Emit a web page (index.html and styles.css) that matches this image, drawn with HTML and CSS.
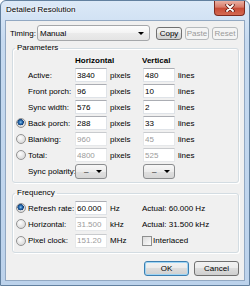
FILE: index.html
```html
<!DOCTYPE html>
<html>
<head>
<link rel="stylesheet" href="styles.css">
</head>
<body>
<div class="window">
  <div class="titlebar">
    <span class="title">Detailed Resolution</span>
    <span class="close">
      <svg width="10" height="8" viewBox="0 0 10 8">
        <path d="M2 1 L8 7 M8 1 L2 7" stroke="#5a1a12" stroke-width="3.4" stroke-linecap="round"/>
        <path d="M2 1 L8 7 M8 1 L2 7" stroke="#fff" stroke-width="1.8" stroke-linecap="round"/>
      </svg>
    </span>
  </div>

  <div class="client">
    <div class="timing">
      <span class="lbl">Timing:</span>
      <div class="combo wide"><span>Manual</span><span class="arrow"></span></div>
      <button class="btn copy">Copy</button>
      <button class="btn paste" disabled>Paste</button>
      <button class="btn reset" disabled>Reset</button>
    </div>

    <fieldset class="group params">
      <legend>Parameters</legend>
      <div class="grid">
        <span></span><span></span>
        <span class="head h1">Horizontal</span>
        <span class="head h2">Vertical</span>

        <span></span><span>Active:</span>
        <input class="edit" value="3840"><span class="unit">pixels</span>
        <input class="edit" value="480"><span class="unit">lines</span>

        <span></span><span>Front porch:</span>
        <input class="edit" value="96"><span class="unit">pixels</span>
        <input class="edit" value="10"><span class="unit">lines</span>

        <span></span><span>Sync width:</span>
        <input class="edit" value="576"><span class="unit">pixels</span>
        <input class="edit" value="2"><span class="unit">lines</span>

        <span class="radio on"></span><span>Back porch:</span>
        <input class="edit" value="288"><span class="unit">pixels</span>
        <input class="edit" value="33"><span class="unit">lines</span>

        <span class="radio"></span><span>Blanking:</span>
        <input class="edit" value="960" disabled><span class="unit">pixels</span>
        <input class="edit" value="45" disabled><span class="unit">lines</span>

        <span class="radio"></span><span>Total:</span>
        <input class="edit" value="4800" disabled><span class="unit">pixels</span>
        <input class="edit" value="525" disabled><span class="unit">lines</span>

        <span></span><span>Sync polarity:</span>
        <div class="combo small"><span>&ndash;</span><span class="arrow"></span></div><span></span>
        <div class="combo small"><span>&ndash;</span><span class="arrow"></span></div><span></span>
      </div>
    </fieldset>

    <fieldset class="group freq">
      <legend>Frequency</legend>
      <div class="grid">
        <span class="radio on"></span><span>Refresh rate:</span>
        <input class="edit" value="60.000"><span class="unit">Hz</span>
        <span class="actual">Actual: 60.000 Hz</span>

        <span class="radio"></span><span>Horizontal:</span>
        <input class="edit" value="31.500" disabled><span class="unit">kHz</span>
        <span class="actual">Actual: 31.500 kHz</span>

        <span class="radio"></span><span>Pixel clock:</span>
        <input class="edit" value="151.20" disabled><span class="unit">MHz</span>
        <span class="actual check"><span class="box"></span>Interlaced</span>
      </div>
    </fieldset>

    <div class="buttons">
      <button class="btn big ok">OK</button>
      <button class="btn big">Cancel</button>
    </div>
  </div>
</div>
</body>
</html>
```

FILE: styles.css
```css
* {
  box-sizing: border-box;
}
body {
  margin: 0;
  background: #fff;
  font-family: "Liberation Sans", Arial, sans-serif;
  font-size: 8px;
  color: #000;
}

.window {
  width: 250px;
  height: 286px;
  display: flex;
  flex-direction: column;
  border: 1px solid #62809f;
  border-radius: 6px 6px 0 0;
  padding: 0 4px 4px;
  background: linear-gradient(#dce9f7, #c6daf0 40px, #bcd2eb);
}
.titlebar {
  height: 19px;
  display: flex;
  justify-content: space-between;
  align-items: flex-start;
}
.title {
  padding: 4px 0 0 1px;
  line-height: 10px;
  text-shadow: 0 0 3px #fff, 0 0 3px #fff;
}
.close {
  width: 31px;
  height: 15px;
  border: 1px solid #7e2a1e;
  border-top: 0;
  border-radius: 0 0 4px 4px;
  background: linear-gradient(#eab0a3, #d77a68 45%, #c74a35 50%, #d36a52);
  display: flex;
  align-items: center;
  justify-content: center;
}

.client {
  flex: 1;
  background: #f0f0f0;
  border: 1px solid #92a8c2;
  display: flex;
  flex-direction: column;
}

.timing {
  display: flex;
  align-items: center;
  height: 16px;
  margin: 4px 6px 0 4px;
}
.timing .lbl {
  width: 27px;
}

.combo {
  display: flex;
  align-items: center;
  justify-content: space-between;
  border: 1px solid #8a8c8e;
  border-radius: 3px;
  background: linear-gradient(#f7f7f7, #ececec 50%, #e0e0e0 50%, #d6d6d6);
}
.combo.wide {
  width: 113px;
  height: 16px;
  margin-right: 6px;
  padding: 0 5px 0 2px;
  background: linear-gradient(#fdfdfd, #f3f3f3 50%, #ebebeb 50%, #e4e4e4);
  border-color: #a5a7aa;
}
.combo.small {
  width: 32px;
  height: 15px;
  padding: 0 4px 0 8px;
}
.arrow {
  width: 0;
  height: 0;
  border-left: 3px solid transparent;
  border-right: 3px solid transparent;
  border-top: 3px solid #000;
}

.btn {
  font-family: inherit;
  font-size: 8px;
  color: #000;
  padding: 0;
  height: 13px;
  border: 1px solid #707070;
  border-radius: 3px;
  background: linear-gradient(#f2f2f2, #ebebeb 50%, #dddddd 50%, #cfcfcf);
}
.btn:disabled {
  color: #9a9a9a;
  border-color: #b5b9bc;
  background: #f4f4f4;
}
.copy {
  width: 26px;
}
.paste {
  width: 24px;
  margin-left: 3px;
}
.reset {
  width: 26px;
  margin-left: 3px;
}

.group {
  margin: 0 5px 0 6px;
  border: 1px solid #d3dce2;
  border-radius: 3px;
  box-shadow: inset 1px 1px 0 #fff, 1px 1px 0 #fff;
  padding: 0 0 2px 3px;
}
.group legend {
  line-height: 10px;
  padding: 0 2px;
  margin-left: -1px;
}
.params {
  margin-top: 2px;
}
.freq {
  margin-top: 5px;
  padding-top: 2px;
  padding-bottom: 3px;
}

.grid {
  display: grid;
  grid-template-columns: 12px 47px 32px 36px 32px auto;
  align-items: center;
  white-space: nowrap;
}
.params .grid {
  grid-template-rows: 14px repeat(6, 16px) 17px;
}
.freq .grid {
  grid-template-rows: 16px 16px 17px;
}
.head {
  font-weight: bold;
}
.h1 {
  grid-column: span 2;
}
.h2 {
  grid-column: span 2;
  margin-left: -1px;
}
.unit {
  padding-left: 3px;
}
.actual {
  grid-column: 5 / span 2;
  margin-left: -1px;
}

.edit {
  width: 32px;
  height: 14px;
  margin: 0;
  padding: 0 0 0 1px;
  font-family: inherit;
  font-size: 8px;
  color: #000;
  background: #fff;
  border: 1px solid #dfe3e8;
  border-top-color: #abadb3;
  border-radius: 0;
  outline: none;
}
.edit:disabled {
  color: #9b9b9b;
  background: #fff;
  border-color: #e6e8ea;
  border-top-color: #c9cbce;
}

.radio {
  width: 10px;
  height: 10px;
  border: 1px solid #939393;
  border-radius: 50%;
  background: radial-gradient(circle at 40% 35%, #fdfdfd, #dcdcdc 70%, #cfcfcf);
}
.radio.on {
  background: radial-gradient(circle at 45% 40%, #8cc6ee 0, #2a6fb4 1.6px, #123f78 3px, #e2e2e2 3.4px, #cfcfcf);
}

.check {
  display: flex;
  align-items: center;
}
.box {
  width: 10px;
  height: 10px;
  margin-right: 1px;
  border: 1px solid #8e8f8f;
  background: linear-gradient(135deg, #dcdcdc, #fbfbfb);
}

.buttons {
  display: flex;
  justify-content: flex-end;
  margin: 8px 5px 0 0;
}
.btn.big {
  width: 45px;
  height: 15px;
  margin-left: 5px;
}
.btn.ok {
  border-color: #3c7fb1;
  box-shadow: inset 0 0 0 1px #9fd5f5;
}
```
